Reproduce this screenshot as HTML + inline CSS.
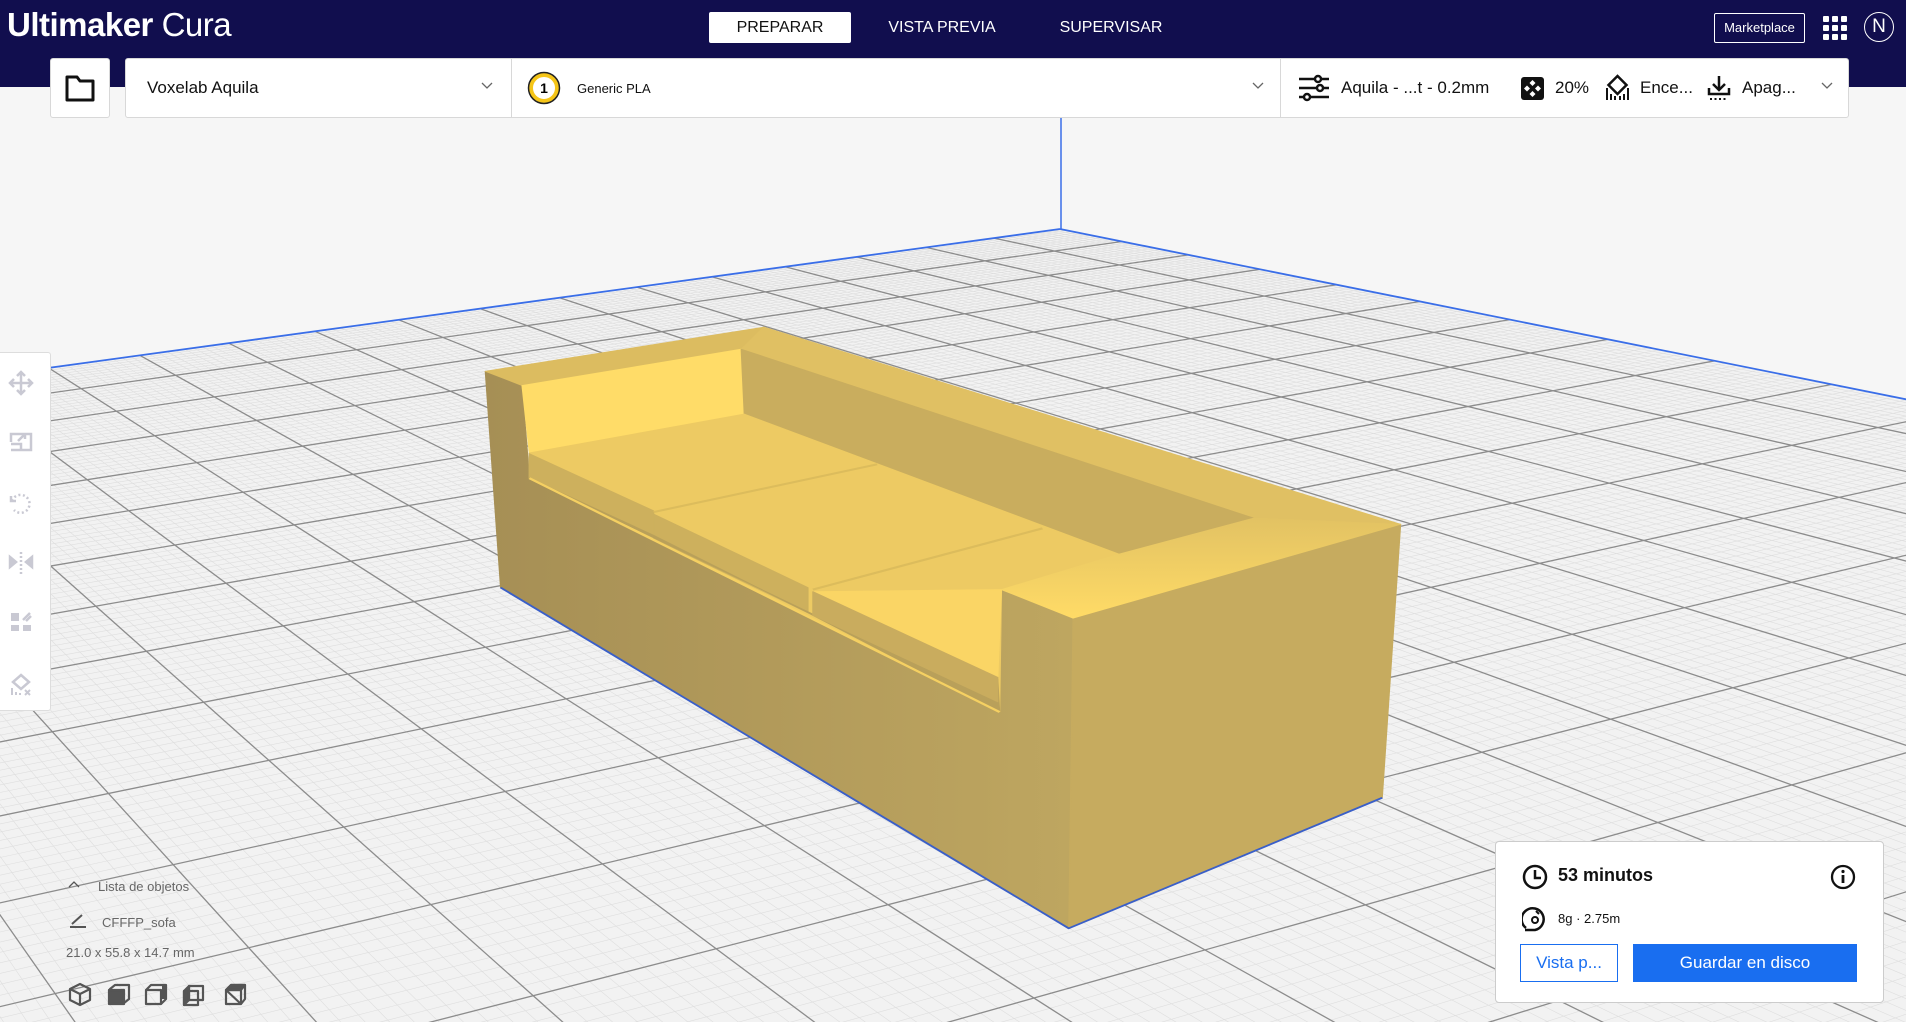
<!DOCTYPE html>
<html><head><meta charset="utf-8"><style>
*{margin:0;padding:0;box-sizing:border-box}
body{width:1906px;height:1022px;overflow:hidden;background:#f6f6f6;font-family:"Liberation Sans",sans-serif;position:relative}
#hdr{position:absolute;left:0;top:0;width:1906px;height:87px;background:#110e4e}
.abs{position:absolute}
.title{left:7px;top:6px;color:#fff;font-size:33px;letter-spacing:-0.5px}
.tab{top:12px;height:31px;line-height:31px;font-size:16px;color:#fff;text-align:center}
.bar{background:#fff;border:1px solid #d8d8d8;border-radius:3px}
.tx{color:#111;white-space:nowrap}
</style></head><body>
<svg id="scene" class="abs" style="left:0;top:0" width="1906" height="1022" viewBox="0 0 1906 1022"></svg>
<div id="hdr"></div>
<div class="abs title"><b>Ultimaker</b> <span style="font-weight:300">Cura</span></div>
<div class="abs tab" style="left:709px;width:142px;background:#fff;color:#111;border-radius:2px">PREPARAR</div>
<div class="abs tab" style="left:872px;width:140px">VISTA PREVIA</div>
<div class="abs tab" style="left:1040px;width:142px">SUPERVISAR</div>
<div class="abs" style="left:1714px;top:13px;width:91px;height:30px;border:1px solid #fff;border-radius:2px;color:#fff;font-size:13px;line-height:28px;text-align:center">Marketplace</div>
<svg class="abs" style="left:1822px;top:15px" width="26" height="26" viewBox="0 0 26 26" fill="#fff"><rect x="1" y="1" width="6" height="6" rx="1"/><rect x="10" y="1" width="6" height="6" rx="1"/><rect x="19" y="1" width="6" height="6" rx="1"/><rect x="1" y="10" width="6" height="6" rx="1"/><rect x="10" y="10" width="6" height="6" rx="1"/><rect x="19" y="10" width="6" height="6" rx="1"/><rect x="1" y="19" width="6" height="6" rx="1"/><rect x="10" y="19" width="6" height="6" rx="1"/><rect x="19" y="19" width="6" height="6" rx="1"/></svg>
<div class="abs" style="left:1864px;top:12px;width:30px;height:30px;border:1.5px solid #fff;border-radius:50%;color:#fff;font-size:19px;line-height:27px;text-align:center">N</div>

<div class="abs bar" style="left:50px;top:58px;width:60px;height:60px"></div>
<svg class="abs" style="left:64px;top:73px" width="32" height="30" viewBox="0 0 32 30"><path d="M3 4h10l3 4h13v19H3z" fill="none" stroke="#111" stroke-width="3" stroke-linejoin="round"/></svg>
<div class="abs bar" style="left:125px;top:58px;width:1724px;height:60px"></div>
<div class="abs" style="left:511px;top:59px;width:1px;height:58px;background:#d8d8d8"></div>
<div class="abs" style="left:1280px;top:59px;width:1px;height:58px;background:#d8d8d8"></div>
<div class="abs tx" style="left:147px;top:78px;font-size:17px">Voxelab Aquila</div>
<svg class="abs" style="left:481px;top:82px" width="12" height="8"><path d="M1 1l5 5 5-5" fill="none" stroke="#666" stroke-width="1.3"/></svg>
<svg class="abs" style="left:527px;top:71px" width="34" height="34" viewBox="0 0 34 34"><circle cx="17" cy="17" r="13" fill="#fff" stroke="#f5c518" stroke-width="4"/><circle cx="17" cy="17" r="15.5" fill="none" stroke="#222" stroke-width="1.5"/><text x="17" y="22" font-size="14" font-weight="bold" text-anchor="middle" font-family="Liberation Sans">1</text></svg>
<div class="abs tx" style="left:577px;top:81px;font-size:13px">Generic PLA</div>
<svg class="abs" style="left:1252px;top:82px" width="12" height="8"><path d="M1 1l5 5 5-5" fill="none" stroke="#666" stroke-width="1.3"/></svg>
<svg class="abs" style="left:1298px;top:74px" width="32" height="28" viewBox="0 0 32 28" stroke="#111" stroke-width="2.5" fill="#fff"><path d="M1 5h30M1 14h30M1 23h30"/><circle cx="20" cy="5" r="3"/><circle cx="22" cy="14" r="3"/><circle cx="9" cy="23" r="3"/></svg>
<div class="abs tx" style="left:1341px;top:78px;font-size:17px">Aquila - ...t - 0.2mm</div>
<svg class="abs" style="left:1521px;top:77px" width="23" height="23" viewBox="0 0 23 23"><rect x="0" y="0" width="23" height="23" rx="3" fill="#111"/><g fill="#fff"><path d="M11.5 3l3 3-3 3-3-3z"/><path d="M11.5 14l3 3-3 3-3-3z"/><path d="M6 8.5l3 3-3 3-3-3z"/><path d="M17 8.5l3 3-3 3-3-3z"/></g></svg>
<div class="abs tx" style="left:1555px;top:78px;font-size:17px">20%</div>
<svg class="abs" style="left:1605px;top:74px" width="25" height="28" viewBox="0 0 25 28"><path d="M12.5 2l9 9-9 9-9-9z" fill="none" stroke="#111" stroke-width="2.5"/><path d="M2 14v12M6 20v6M10 22v4M15 22v4M19 20v6M23 14v12" stroke="#111" stroke-width="2"/></svg>
<div class="abs tx" style="left:1640px;top:78px;font-size:17px">Ence...</div>
<svg class="abs" style="left:1707px;top:74px" width="24" height="28" viewBox="0 0 24 28"><path d="M12 2v13M6 10l6 6 6-6M2 14v6h20v-6" fill="none" stroke="#111" stroke-width="2.5"/><path d="M3 25h18" stroke="#111" stroke-width="2" stroke-dasharray="2 2.5"/></svg>
<div class="abs tx" style="left:1742px;top:78px;font-size:17px">Apag...</div>
<svg class="abs" style="left:1821px;top:82px" width="12" height="8"><path d="M1 1l5 5 5-5" fill="none" stroke="#666" stroke-width="1.3"/></svg>

<div class="abs bar" style="left:-4px;top:352px;width:55px;height:359px;border-color:#ddd"></div>
<svg class="abs" style="left:0;top:352px" width="50" height="359" viewBox="0 0 50 359" fill="none" stroke="#c9c9d3" stroke-width="2.5">
<path d="M21 20v22M10 31h22M17 24l4-4 4 4M17 38l4 4 4-4M14 27l-4 4 4 4M28 27l4 4-4 4"/>
<g transform="translate(0,16)"><path d="M11 82h20v-16h-20v8M11 76h10v6M18 73l7-7M20 66h5v5"/></g>
<g transform="translate(0,22)"><path d="M12 127a9 9 0 1 1 2 9" stroke-dasharray="2 2.5"/><path d="M11 122v5h5"/></g>
<g transform="translate(0,22)"><path d="M10 183l6 5-6 5zM32 183l-6 5 6 5z" fill="#c9c9d3"/><path d="M21 178v22" stroke-dasharray="2 2"/></g>
<g transform="translate(0,18)"><path d="M11 243h8v8h-8zM11 255h8v6h-8zM23 255h8v6h-8z" fill="#c9c9d3" stroke="none"/><path d="M23 250l7-7M26 251l5-5"/></g>
<g transform="translate(0,4)"><path d="M21 319l8 7-8 7-8-7z"/><path d="M12 332v7M16 336v3M20 337v2M25 334l5 5M30 334l-5 5" stroke-width="2"/></g>
</svg>

<svg class="abs" style="left:68px;top:880px" width="12" height="8"><path d="M1 7l5-5 5 5" fill="none" stroke="#555" stroke-width="1.3"/></svg>
<div class="abs" style="left:98px;top:879px;font-size:13px;color:#666">Lista de objetos</div>
<svg class="abs" style="left:68px;top:913px" width="20" height="16"><path d="M2 14h16M4 11l10-9" stroke="#555" stroke-width="2" fill="none"/></svg>
<div class="abs" style="left:102px;top:915px;font-size:13px;color:#666">CFFFP_sofa</div>
<div class="abs" style="left:66px;top:945px;font-size:13px;color:#666">21.0 x 55.8 x 14.7 mm</div>
<svg class="abs" style="left:68px;top:982px" width="180" height="26" viewBox="0 0 180 26" stroke="#555" stroke-width="2.2" fill="none" stroke-linejoin="round">
<path d="M12 2l10 5v11l-10 5-10-5V7zM2 7l10 5 10-5M12 12v11"/>
<path d="M42 7l5-4h14v14l-5 4z" /><rect x="41" y="8" width="15" height="14" fill="#555"/>
<path d="M78 8h15v14h-15zM78 8l5-5h15v14l-5 5" /><rect x="94" y="4" width="4" height="13" fill="#555" stroke="none"/>
<path d="M121 4h14v14h-14zM116 9h14v14h-14z"/><path d="M116 9l5-5v14l-5 5z" fill="#555"/>
<path d="M158 8h15v14h-15zM158 8l5-5h14v14l-4 5z"/><path d="M158 8l5-5h14l-4 5z" fill="#555"/>
</svg>

<div class="abs bar" style="left:1495px;top:841px;width:389px;height:162px;border-color:#ccc;border-radius:4px"></div>
<svg class="abs" style="left:1522px;top:864px" width="26" height="26" viewBox="0 0 26 26"><circle cx="13" cy="13" r="11" fill="none" stroke="#111" stroke-width="2.5"/><path d="M13 6v8h6" fill="none" stroke="#111" stroke-width="2.5"/></svg>
<div class="abs tx" style="left:1558px;top:865px;font-size:18px;font-weight:bold">53 minutos</div>
<svg class="abs" style="left:1830px;top:864px" width="26" height="26" viewBox="0 0 26 26"><circle cx="13" cy="13" r="11" fill="none" stroke="#111" stroke-width="2.3"/><rect x="11.6" y="11" width="2.8" height="8" fill="#111"/><circle cx="13" cy="7.5" r="1.6" fill="#111"/></svg>
<svg class="abs" style="left:1522px;top:906px" width="26" height="26" viewBox="0 0 26 26"><path d="M4 22A11 11 0 1 1 13 24H3" fill="none" stroke="#111" stroke-width="2.5"/><circle cx="13" cy="14" r="3" fill="none" stroke="#111" stroke-width="2"/><path d="M14 5l3 3" stroke="#111" stroke-width="2"/></svg>
<div class="abs tx" style="left:1558px;top:911px;font-size:13px">8g · 2.75m</div>
<div class="abs" style="left:1520px;top:944px;width:98px;height:38px;border:1.5px solid #196ef0;color:#196ef0;font-size:17px;line-height:35px;text-align:center">Vista p...</div>
<div class="abs" style="left:1633px;top:944px;width:224px;height:38px;background:#196ef0;color:#fff;font-size:17px;line-height:38px;text-align:center">Guardar en disco</div>

<script>
(function(){
var svg=document.getElementById("scene");
var VA=[6353,-498],VB=[-733,-132],C=[1060,229],s1=-0.001234,s2=-0.003344;
function P(u,v){var d=1+s1*u+s2*v;return[(s1*u*VA[0]+s2*v*VB[0]+C[0])/d,(s1*u*VA[1]+s2*v*VB[1]+C[1])/d];}
function vmax(u){return Math.min(220,(0.95+s1*u)/(-s2));}
function umax(v){return Math.min(220,(0.95+s2*v)/(-s1));}
var h="";
var pts=[P(0,0),P(220,0),P(220,vmax(220)),P(umax(220),220),P(0,220)];
h+='<polygon points="'+pts.map(function(p){return p[0].toFixed(1)+","+p[1].toFixed(1)}).join(" ")+'" fill="#f2f2f2"/>';
function ln(a,b,c,w){h+='<line x1="'+a[0].toFixed(1)+'" y1="'+a[1].toFixed(1)+'" x2="'+b[0].toFixed(1)+'" y2="'+b[1].toFixed(1)+'" stroke="'+c+'" stroke-width="'+w+'"/>';}
for(var i=1;i<220;i++){if(i%10==0)continue;ln(P(i,0),P(i,vmax(i)),"#dedede",0.6);ln(P(0,i),P(umax(i),i),"#dedede",0.6);}
for(var i=10;i<220;i+=10){ln(P(i,0),P(i,vmax(i)),"#8c8c8c",1.3);ln(P(0,i),P(umax(i),i),"#8c8c8c",1.3);}
ln(P(0,0),P(220,0),"#3a6ee8",1.8);ln(P(0,0),P(0,220),"#3a6ee8",1.8);
ln([1061,117],[1061,229],"#3a6ee8",1.5);
h+='<defs><linearGradient id="lf" x1="0" y1="0" x2="1" y2="0"><stop offset="0" stop-color="#a68f55"/><stop offset="1" stop-color="#bea660"/></linearGradient><linearGradient id="tp" x1="0" y1="0" x2="0" y2="1"><stop offset="0" stop-color="#e2c263"/><stop offset="1" stop-color="#ffdb66"/></linearGradient></defs>';
h+='<g transform="translate(470,310) scale(0.61224,0.40816)" stroke-linejoin="round">';
function pg(p,f){h+='<polygon points="'+p+'" fill="'+f+'" stroke="'+f+'" stroke-width="2"/>';}
pg("25,150 85,185 97,410 865,980 868,685 985,755 978,1515 50,680","url(#lf)");
pg("985,755 1520,525 1490,1195 978,1515","#c6ab5f");
pg("25,150 480,42 443,96 85,185","#dcbc60");
pg("480,42 1520,525 1280,510 443,96","#e0c063");
pg("85,185 443,96 448,255 97,350","#ffdc68");
pg("443,96 1280,510 1060,598 448,255","#c9ad5e");
pg("97,350 448,255 1060,598 868,685 865,985 97,412","#edca63");
pg("97,352 300,492 300,552 97,412","#cdb05d");
pg("300,500 552,680 552,742 300,560","#cdb05d");
pg("97,412 300,552 552,742 865,985 862,905 560,745 300,558","#b9a05a");
pg("560,690 868,685 862,900","#fad565");
pg("560,690 862,900 862,960 560,748","#c9ac5e");
pg("868,685 1060,598 1280,510 1520,525 985,755","url(#tp)");
h+='<path d="M300,495 L665,378 M560,685 L935,535" stroke="#dcbc5c" stroke-width="5"/>';
h+='<path d="M97,412 L865,985" stroke="#f5d062" stroke-width="5"/>';
h+='<path d="M50,680 L978,1515 L1490,1195" stroke="#3a5fc8" stroke-width="4" fill="none"/>';
h+='</g>';
svg.innerHTML=h;
})();
</script>
</body></html>
